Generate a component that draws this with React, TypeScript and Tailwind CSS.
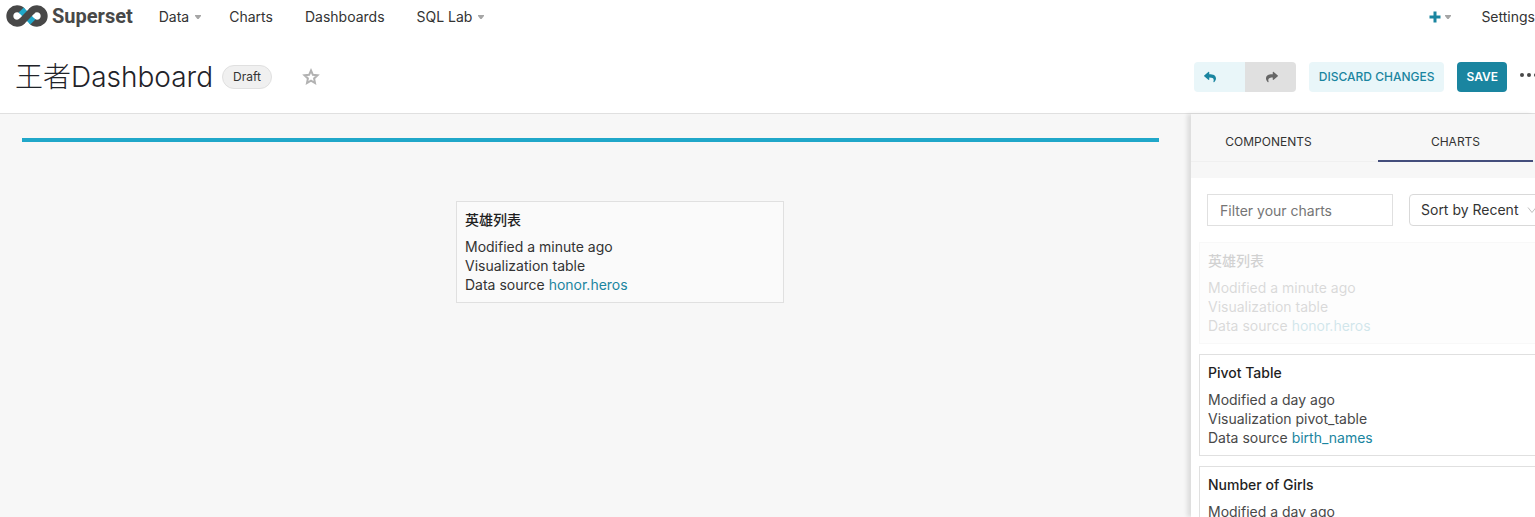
import React from 'react';
import { FaReply, FaShare } from 'react-icons/fa';

interface ChartInfo {
  name: string;
  modified: string;
  visualization: string;
  dataSource: string;
  used?: boolean;
}

const charts: ChartInfo[] = [
  { name: '英雄列表', modified: 'a minute ago', visualization: 'table', dataSource: 'honor.heros', used: true },
  { name: 'Pivot Table', modified: 'a day ago', visualization: 'pivot_table', dataSource: 'birth_names' },
  { name: 'Number of Girls', modified: 'a day ago', visualization: 'big_number_total', dataSource: 'birth_names' },
];

const Caret: React.FC = () => (
  <svg viewBox="0 0 6 4" className="w-1.5 h-1 fill-[#a6a6a6]" aria-hidden="true">
    <path d="M0 0h6v1L3.6 4H2.4L0 1z" />
  </svg>
);

const Logo: React.FC = () => (
  <a href="#" className="flex items-center gap-1 text-[#484848]">
    <svg viewBox="0 0 42 22" className="w-[42px] h-[22px]" fill="none" strokeWidth="7" aria-hidden="true">
      <path
        d="M16.200 6A7.200 7.200 0 1 0 16.200 16M25.800 6A7.200 7.200 0 1 1 25.800 16"
        stroke="#484848"
      />
      <path d="M15.200 5 26.800 17" stroke="#20a7c9" />
      <path d="M15.700 16.500 26.300 5.500" stroke="#484848" />
    </svg>
    <span className="font-['Roboto',sans-serif] text-xl leading-6 font-bold">Superset</span>
  </a>
);

const ChartCard: React.FC<{ chart: ChartInfo }> = ({ chart }) => (
  <>
    <h3 className="text-sm leading-5 font-medium text-[#1f1f1f]">{chart.name}</h3>
    <div className="mt-[7px] text-sm leading-[19px]">
      <p>Modified {chart.modified}</p>
      <p>Visualization {chart.visualization}</p>
      <p>
        Data source{' '}
        <a href="#" className="text-[#1a85a0]">{chart.dataSource}</a>
      </p>
    </div>
  </>
);

const NavBar: React.FC = () => (
  <nav className="flex h-8 items-center justify-between pl-1.5 text-sm">
    <div className="flex items-center">
      <Logo />
      <div className="flex items-center pt-0.5 pl-[26px]">
        <button className="flex items-center gap-1.5">Data <Caret /></button>
        <a href="#" className="ml-7">Charts</a>
        <a href="#" className="ml-8">Dashboards</a>
        <button className="ml-8 flex items-center gap-1.5">SQL Lab <Caret /></button>
      </div>
    </div>
    <div className="flex items-center pt-0.5">
      <button aria-label="New" className="flex items-center gap-1 text-[#1a85a0]">
        <svg viewBox="0 0 12 12" className="size-3" fill="none" stroke="currentColor" strokeWidth="3">
          <path d="M6 .5v11M.5 6h11" />
        </svg>
        <Caret />
      </button>
      <button className="ml-[30px]">Settings</button>
    </div>
  </nav>
);

const DashboardHeader: React.FC = () => (
  <header className="flex h-[82px] items-center justify-between border-b border-[#e0e0e0] pt-2 pl-[15px]">
    <div className="flex items-center">
      <h1 className="text-[28px] leading-9 font-light text-[#1f2329]">王者Dashboard</h1>
      <span className="ml-[9px] rounded-full border border-[#e0e0e0] bg-[#f0f0f0] px-2.5 text-xs leading-[22px]">
        Draft
      </span>
      <button aria-label="Favorite" className="ml-[30px]">
        <svg viewBox="0 0 18 18" className="size-[18px]" fill="none" stroke="#b2b2b2" strokeWidth="2">
          <path d="m9 2.500 1.900 4.300 4.600.5-3.400 3.100.9 4.600L9 12.700 5 15l.9-4.600L2.500 7.300l4.600-.5z" />
        </svg>
      </button>
    </div>
    <div className="flex items-center text-xs font-medium">
      <div className="flex overflow-hidden rounded">
        <button aria-label="Undo" className="flex h-[30px] w-[51px] items-center bg-[#e9f6f9] pl-2.5 text-[#1a85a0]">
          <FaReply className="size-3" />
        </button>
        <button aria-label="Redo" className="flex h-[30px] w-[51px] items-center bg-[#e0e0e0] pl-[21px] text-[#666666]">
          <FaShare className="size-3" />
        </button>
      </div>
      <button className="ml-[13px] h-[30px] rounded bg-[#e9f6f9] px-2.5 text-[#1a85a0]">DISCARD CHANGES</button>
      <button className="ml-[13px] h-[30px] rounded bg-[#1a85a0] px-[9px] font-semibold text-white">SAVE</button>
      <button aria-label="More options" className="ml-3 w-4 overflow-hidden pb-1">
        <svg viewBox="0 0 20 6" className="h-1.5 w-5 max-w-none fill-[#484848]">
          <circle cx="3" cy="3" r="2" />
          <circle cx="10" cy="3" r="2" />
          <circle cx="17" cy="3" r="2" />
        </svg>
      </button>
    </div>
  </header>
);

const Canvas: React.FC = () => (
  <main className="relative flex-1 px-[22px] pt-6">
    <div className="mr-2.5 h-1 bg-[#20a7c9]" />
    <div className="absolute top-[87px] left-[456px] w-[328px] border border-[#e0e0e0] bg-[#fafafa] p-2">
      <ChartCard chart={charts[0]} />
    </div>
  </main>
);

const Sidebar: React.FC = () => (
  <aside className="w-[344px] shrink-0 overflow-hidden bg-white shadow-[-4px_0_4px_0_rgba(0,0,0,0.1)]">
    <div className="bg-[#f7f7f7] pb-4">
      <div role="tablist" className="flex h-12 gap-8 border-b border-[#f0f0f0] text-xs">
        <button role="tab" aria-selected="false" className="h-12 w-[155px] border-b-2 border-transparent pt-2.5">
          COMPONENTS
        </button>
        <button role="tab" aria-selected="true" className="h-12 w-[155px] border-b-2 border-[#444e7c] pt-2.5">
          CHARTS
        </button>
      </div>
    </div>
    <div className="flex gap-4 p-4 pr-0">
      <input
        type="text"
        aria-label="Filter your charts"
        placeholder="Filter your charts"
        className="h-8 w-[186px] shrink-0 border border-[#e0e0e0] px-3 text-sm placeholder:text-[#757575]"
      />
      <div className="relative -mr-4 w-[142px] shrink-0">
        <select
          aria-label="Sort charts"
          className="h-8 w-full appearance-none rounded-sm border border-[#d9d9d9] bg-white px-[11px] text-sm"
        >
          <option>Sort by Recent</option>
        </select>
        <svg viewBox="0 0 10 8" className="absolute top-3 right-3.5 h-2 w-2.5" fill="none" stroke="#bfbfbf">
          <path d="m1 1.500 4 5 4-5" />
        </svg>
      </div>
    </div>
    <ul className="flex flex-col gap-2.5 pl-2 text-[#484848]">
      {charts.map(chart => (
        <li
          key={chart.name}
          className={`-mr-2 border border-[#e0e0e0] p-2 ${chart.used ? 'bg-[#f7f7f7] opacity-20' : 'bg-white'}`}
        >
          <ChartCard chart={chart} />
        </li>
      ))}
    </ul>
  </aside>
);

const App: React.FC = () => {
  return (
    <div className="flex h-screen flex-col overflow-hidden bg-white font-['Inter','Noto_Sans_CJK_SC',sans-serif] text-[#333333]">
      <NavBar />
      <DashboardHeader />
      <div className="flex min-h-0 flex-1 bg-[#f7f7f7]">
        <Canvas />
        <Sidebar />
      </div>
    </div>
  );
};

export default App;
